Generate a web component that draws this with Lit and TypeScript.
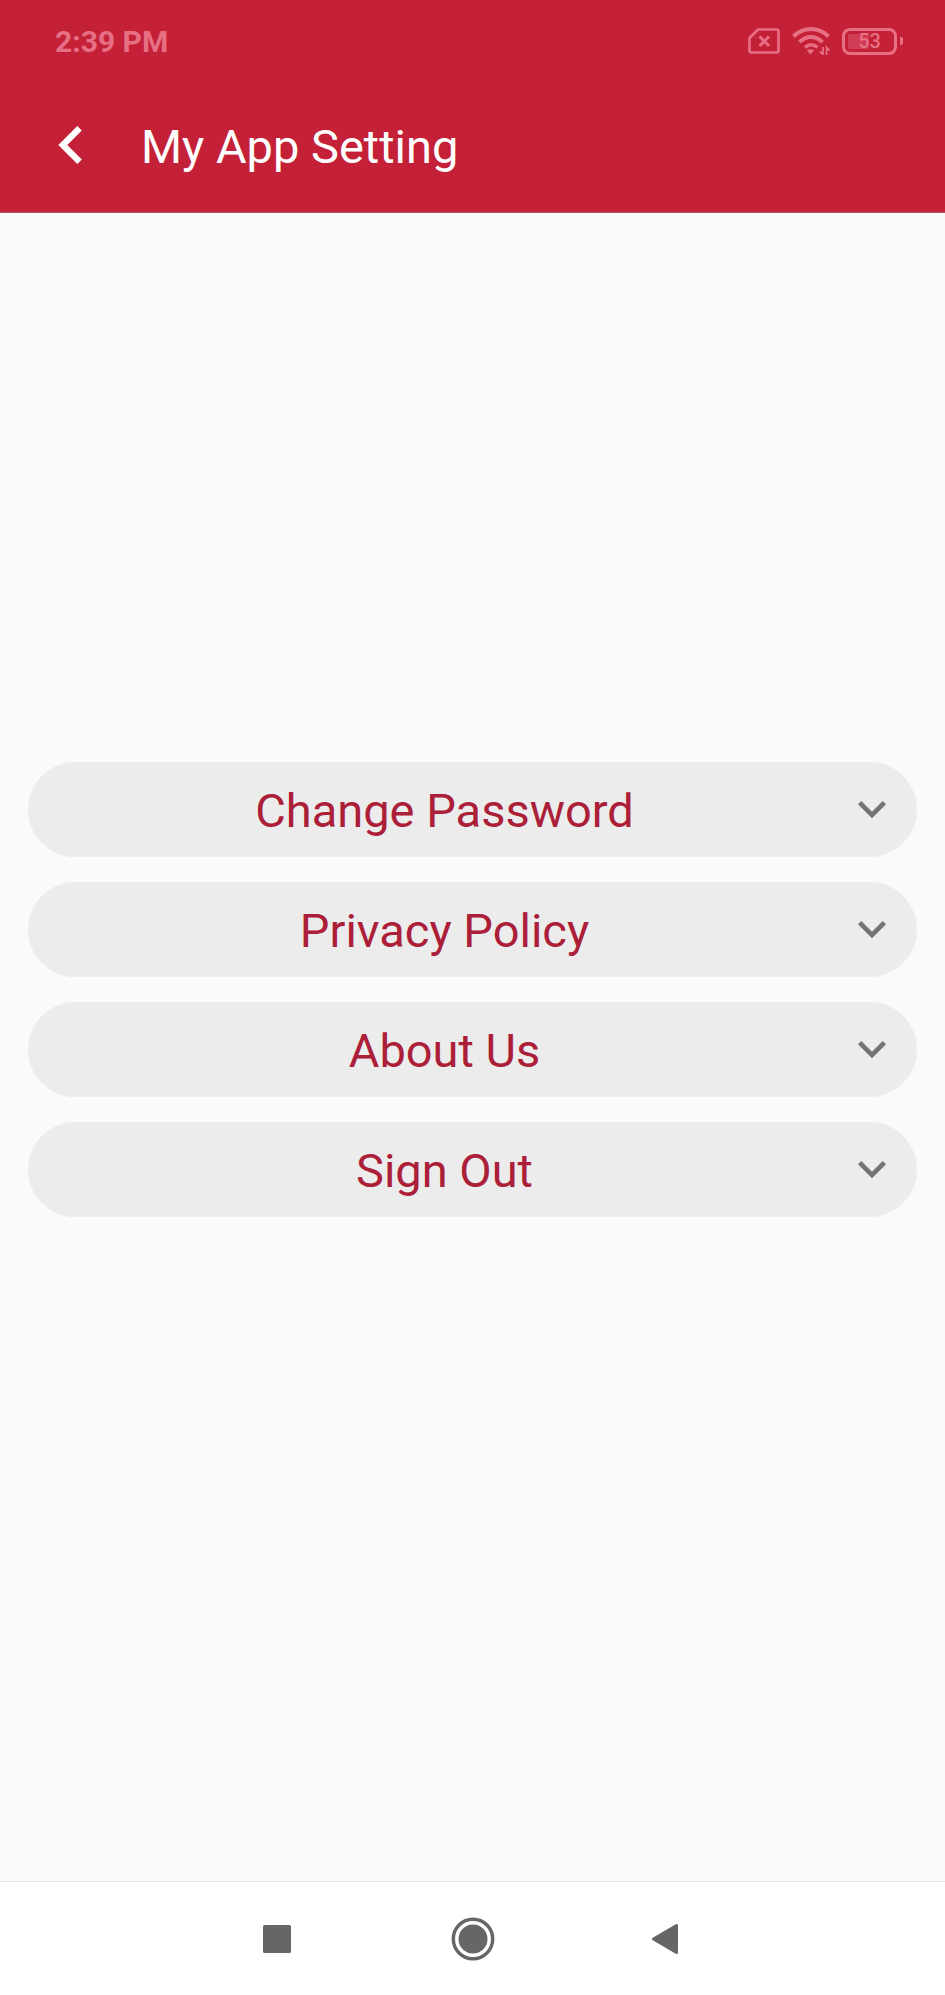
import { LitElement, html, css, svg } from "lit";
import { customElement, property } from "lit/decorators.js";

@customElement("status-bar")
class StatusBar extends LitElement {
  @property() time = "2:39 PM";
  @property({ type: Number }) battery = 53;

  static styles = css`
    :host {
      display: flex;
      align-items: center;
      justify-content: space-between;
      height: 84px;
      padding: 0 42px 0 55px;
      color: #e76f83;
      box-sizing: border-box;
    }
    .time {
      font-size: 30px;
      line-height: 36px;
      font-weight: 700;
    }
    .icons {
      display: flex;
      align-items: center;
      gap: 12px;
      padding-bottom: 2px;
    }
    svg {
      display: block;
    }
    .battery {
      display: flex;
      align-items: center;
      gap: 3px;
    }
    .cell {
      display: flex;
      align-items: center;
      justify-content: center;
      width: 55px;
      height: 27px;
      box-sizing: border-box;
      border: 3px solid currentColor;
      border-radius: 8px;
      font-size: 20px;
      line-height: 20px;
      font-weight: 500;
      background: linear-gradient(90deg, #cf3c53 0 50%, transparent 50%) 3px 3px / 43px 15px no-repeat;
    }
    .tip {
      width: 3px;
      height: 8px;
      border-radius: 0 2px 2px 0;
      background: currentColor;
    }
  `;

  render() {
    return html`
      <span class="time">${this.time}</span>
      <div class="icons">
        <svg width="32" height="26" viewBox="0 0 32 26" fill="none" stroke="currentColor" aria-hidden="true">
          <path d="M10 1.5H28.5Q30.5 1.5 30.5 3.5V22.5Q30.5 24.5 28.5 24.5H3.500Q1.500 24.5 1.500 22.5V10Z" stroke-width="2.6" stroke-linejoin="round" />
          <path d="M11.500 8.500L21 18M21 8.500L11.500 18" stroke-width="3" />
        </svg>
        <svg width="38" height="28" viewBox="0 0 38 28" fill="none" stroke="currentColor" stroke-width="4" aria-hidden="true">
          <path d="M1.500 9.500C11.500 -.5 26.500 -.5 36.500 9.500" />
          <path d="M7.500 15.200C14.500 8.300 23.500 8.300 30.500 15.200" />
          <path d="M13 20.500C17 17 21.500 17 25.500 20.500" stroke-width="3.500" />
          <path d="M14.800 23.500Q18.500 20.800 22.200 23.500L18.500 27.500Z" fill="currentColor" stroke="none" />
          <path d="M31 20V27.500L28 24.500M34.500 28V20.500L37.500 23.500" stroke-width="1.800" />
        </svg>
        <div class="battery">
          <div class="cell">${this.battery}</div>
          <div class="tip"></div>
        </div>
      </div>
    `;
  }
}

@customElement("setting-row")
class SettingRow extends LitElement {
  @property() label = "";

  static styles = css`
    :host {
      display: block;
    }
    .row {
      display: flex;
      align-items: center;
      width: 100%;
      height: 95px;
      padding: 0 17px;
      border: 0;
      border-radius: 48px;
      background: #ececec;
      color: #ab2038;
      font: inherit;
      font-size: 47px;
      line-height: 56px;
      cursor: pointer;
    }
    .label {
      flex: 1;
      padding-top: 4px;
      text-align: center;
    }
    .chevron {
      display: block;
      width: 56px;
      height: 56px;
      fill: #757575;
    }
  `;

  render() {
    return html`
      <button class="row" type="button" aria-expanded="false">
        <span class="label">${this.label}</span>
        <svg class="chevron" viewBox="0 0 24 24" aria-hidden="true">
          <path d="M16.590 8.590L12 13.170 7.410 8.590 6 10l6 6 6-6z" />
        </svg>
      </button>
    `;
  }
}

@customElement("app-root")
class AppRoot extends LitElement {
  private items = ["Change Password", "Privacy Policy", "About Us", "Sign Out"];

  private navIcons = [
    { name: "Recent apps", shape: svg`<rect x="8" y="8" width="28" height="28" rx="1.500" />` },
    {
      name: "Home",
      shape: svg`<circle cx="22" cy="22" r="14.500" /><circle cx="22" cy="22" r="19.700" fill="none" stroke="#666" stroke-width="3.400" />`,
    },
    {
      name: "Back",
      shape: svg`<path d="M6.500 22L29.500 8.500V35.500Z" stroke="#666" stroke-width="3" stroke-linejoin="round" />`,
    },
  ];

  static styles = css`
    :host {
      display: flex;
      flex-direction: column;
      min-height: 100vh;
      background: #fafafa;
      font-family: Roboto, "Liberation Sans", sans-serif;
    }
    .top {
      background: #c42138;
      border-bottom: 1px solid #b0505e;
    }
    .bar {
      display: flex;
      align-items: center;
      gap: 32px;
      height: 128px;
      padding: 0 33px 6px;
      box-sizing: border-box;
      color: #fff;
    }
    .back {
      padding: 0;
      border: 0;
      background: none;
      cursor: pointer;
    }
    .back svg {
      display: block;
      width: 76px;
      height: 76px;
      fill: #fff;
    }
    .title {
      margin: 0;
      padding-top: 4px;
      font-size: 47px;
      line-height: 56px;
      font-weight: 400;
    }
    .list {
      flex: 1;
      display: flex;
      flex-direction: column;
      justify-content: center;
      gap: 25px;
      padding: 0 28px 116px;
    }
    .nav {
      display: flex;
      justify-content: center;
      height: 113px;
      background: #fff;
      border-top: 1px solid #e2e2e2;
    }
    .key {
      display: flex;
      align-items: center;
      justify-content: center;
      flex: 0 1 196px;
      padding: 0;
      border: 0;
      background: none;
      cursor: pointer;
    }
    .key svg {
      width: 44px;
      height: 44px;
      fill: #666;
    }
  `;

  render() {
    return html`
      <header class="top">
        <status-bar></status-bar>
        <div class="bar">
          <button class="back" type="button" aria-label="Back">
            <svg viewBox="0 0 24 24" aria-hidden="true">
              <path d="M15.410 7.410L14 6l-6 6 6 6 1.410-1.410L10.830 12z" />
            </svg>
          </button>
          <h1 class="title">My App Setting</h1>
        </div>
      </header>
      <main class="list">
        ${this.items.map((label) => html`<setting-row label=${label}></setting-row>`)}
      </main>
      <nav class="nav">
        ${this.navIcons.map(
          (key) => html`
            <button class="key" type="button" aria-label=${key.name}>
              <svg viewBox="0 0 44 44" aria-hidden="true">${key.shape}</svg>
            </button>
          `
        )}
      </nav>
    `;
  }
}
